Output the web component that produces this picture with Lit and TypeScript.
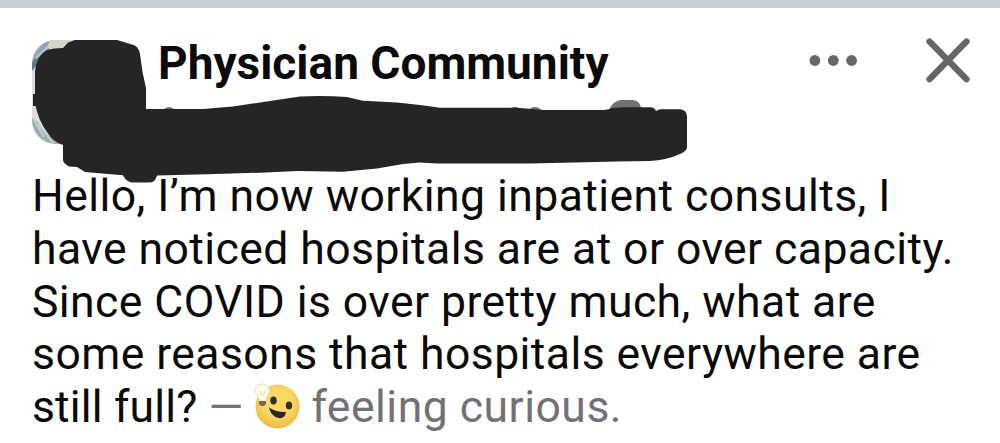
import { LitElement, html, css, svg } from 'lit';
import { customElement, property } from 'lit/decorators.js';

/** Rounded group avatar with a blurry photo texture. */
@customElement('group-avatar')
export class GroupAvatar extends LitElement {
  static styles = css`
    :host {
      display: block;
      width: 104px;
      height: 104px;
      border-radius: 24px;
      overflow: hidden;
    }

    svg {
      display: block;
    }
  `;

  render() {
    return html`
      <svg width="104" height="104" viewBox="0 0 104 104">
        <rect width="104" height="104" fill="#dcdedb" />
        <path d="M0 0H22L16 11L6 21L0 30Z" fill="#94a7af" />
        <path d="M0 22L7 15L13 12L6 24L0 31Z" fill="#667a84" />
        <path d="M4 18L20 3" stroke="#b9c6ca" stroke-width="2" />
        <path d="M18 0H38L30 8H15Z" fill="#d9d3c8" />
        <path d="M0 78L6 82L14 94L30 104H0Z" fill="#9eafb0" />
        <path d="M1 78L12 97M6 84L22 104" stroke="#c2cdcb" stroke-width="2" />
        <rect x="1" y="54" width="3" height="12" fill="#222" />
      </svg>
    `;
  }
}

/** Yellow smiling face with a light bulb, used by the "curious" feeling. */
@customElement('feeling-icon')
export class FeelingIcon extends LitElement {
  static styles = css`
    :host {
      display: inline-block;
      width: 46px;
      height: 46px;
      margin: 0 -0.5px 0 -1px;
      vertical-align: -7px;
    }

    svg {
      display: block;
    }
  `;

  render() {
    return html`
      <svg width="46" height="46" viewBox="0 0 46 46">
        <defs>
          <radialGradient id="face" cx="0.5" cy="0.42" r="0.56">
            <stop offset="0.6" stop-color="#fbd766" />
            <stop offset="1" stop-color="#eebb3f" />
          </radialGradient>
        </defs>
        <circle cx="23.5" cy="23.5" r="22" fill="url(#face)" />
        <ellipse cx="19.5" cy="17.5" rx="3.2" ry="4" fill="#33302a" />
        <ellipse cx="35" cy="22.5" rx="3.2" ry="4" fill="#33302a" />
        <path d="M15 24.5Q23 29.5 32 29Q31 36 24.5 35Q16.500 33 15 24.5Z" fill="#2d2622" />
        <path d="M5 15Q0.500 11 1.500 6Q3 1 8.500 1Q15 2 15.500 8Q15 12 12 15V18H5Z" fill="#fffdf0" stroke="#e0dcc5" />
        <path d="M6 8L8.500 13L11 8" fill="none" stroke="#e0d49b" />
        <path d="M5 18H12V21L10 23H7L5 21Z" fill="#716855" />
      </svg>
    `;
  }
}

/** Freehand marker stroke that hides the author and group details. */
@customElement('marker-stroke')
export class MarkerStroke extends LitElement {
  static styles = css`
    :host {
      display: block;
      width: 660px;
      height: 150px;
    }

    svg {
      display: block;
    }
  `;

  render() {
    return html`
      <svg width="660" height="150" viewBox="30 38 660 150">
        <path
          fill="#252525"
          d="M75 40H117L135 45.500Q139 48 140 54L142.500 72L146 88V109H203L233 106.500L260 102.500L300 96.500
            Q324 95.500 347 97L363 100.700L397 102.500L420 105L440 107.700H517L543 110H600Q608 110 612 108
            L623 107.300H651Q655 108 656 111L660 109.300H680Q687 110 687 117V147Q687 151 680 154
            Q667 160 650 161L617 161.500L530 163.500H437L420 162.500L403 164L377 168.500L343 171.700L297 171
            L260 172.700L207 174.300L157 175.500Q155 182.500 150 182.500H132Q126 182 123 175.300
            L85 172L77 167L69 166.500Q63 163 63 160V145Q53 142 47 132Q38 120 35 103V71
            Q37 55 47 50Q53 48 63 48L68 42.500Z"
        />
      </svg>
    `;
  }
}

@customElement('post-card')
export class PostCard extends LitElement {
  static styles = css`
    :host {
      display: block;
      position: relative;
      padding: 32px 30px 0 32px;
    }

    .header {
      display: flex;
      align-items: flex-start;
      height: 130px;
    }

    .meta {
      flex: 1;
      display: flex;
      flex-direction: column;
      margin-left: 22px;
      margin-top: -4px;
    }

    .title {
      margin: 0;
      font-size: 46px;
      line-height: 54px;
      font-weight: 700;
      white-space: nowrap;
      color: #0a0a0a;
    }

    .details {
      display: block;
      margin-top: 9px;
    }

    .actions {
      display: flex;
      gap: 69px;
    }

    .actions svg {
      display: block;
      overflow: visible;
    }

    .body {
      font-size: 44.5px;
      line-height: 52.8px;
      letter-spacing: 0.43px;
      color: #0a0a0a;
      white-space: nowrap;
    }

    .last {
      letter-spacing: 0.15px;
    }

    .feeling {
      letter-spacing: 0.5px;
      color: #717275;
    }

    .marker {
      position: absolute;
      left: 30px;
      top: 30px;
    }
  `;

  @property() group = '';

  @property({ attribute: false }) lines: string[] = [];

  private moreIcon = svg`
    <circle cx="5.900" cy="20.500" r="5.400" />
    <circle cx="24.300" cy="20.500" r="5.400" />
    <circle cx="42.600" cy="20.500" r="5.400" />
  `;

  render() {
    return html`
      <div class="header">
        <group-avatar></group-avatar>
        <div class="meta">
          <h1 class="title">${this.group}</h1>
          <svg class="details" width="500" height="20" viewBox="0 0 500 20" fill="#717275">
            <circle cx="11" cy="15" r="7" />
            <circle cx="357" cy="16" r="8" />
            <circle cx="377" cy="16" r="8" />
            <path d="M450 12Q456 1 463 1H475Q482 1 484 12Z" />
          </svg>
        </div>
        <div class="actions">
          <svg width="48" height="42" fill="#656669">${this.moreIcon}</svg>
          <svg width="44" height="44" fill="none" stroke="#656669" stroke-width="6.300" stroke-linecap="round">
            <path d="M3.500 1.500L40.500 39.200M40.500 1.500L3.500 39.200" />
          </svg>
        </div>
      </div>
      <div class="body">
        ${this.lines.map((line) => html`<div>${line}</div>`)}
        <div class="last">still full? <span class="feeling">— <feeling-icon></feeling-icon> feeling curious.</span></div>
      </div>
      <marker-stroke class="marker"></marker-stroke>
    `;
  }
}

@customElement('app-root')
export class AppRoot extends LitElement {
  static styles = css`
    :host {
      display: block;
      height: 443px;
      overflow: hidden;
      background: #fff;
      font-family: Roboto, sans-serif;
    }

    .divider {
      height: 8px;
      background: #c8cccf;
    }
  `;

  private lines = [
    'Hello, I’m now working inpatient consults, I',
    'have noticed hospitals are at or over capacity.',
    'Since COVID is over pretty much, what are',
    'some reasons that hospitals everywhere are',
  ];

  render() {
    return html`
      <div class="divider"></div>
      <post-card group="Physician Community" .lines=${this.lines}></post-card>
    `;
  }
}
